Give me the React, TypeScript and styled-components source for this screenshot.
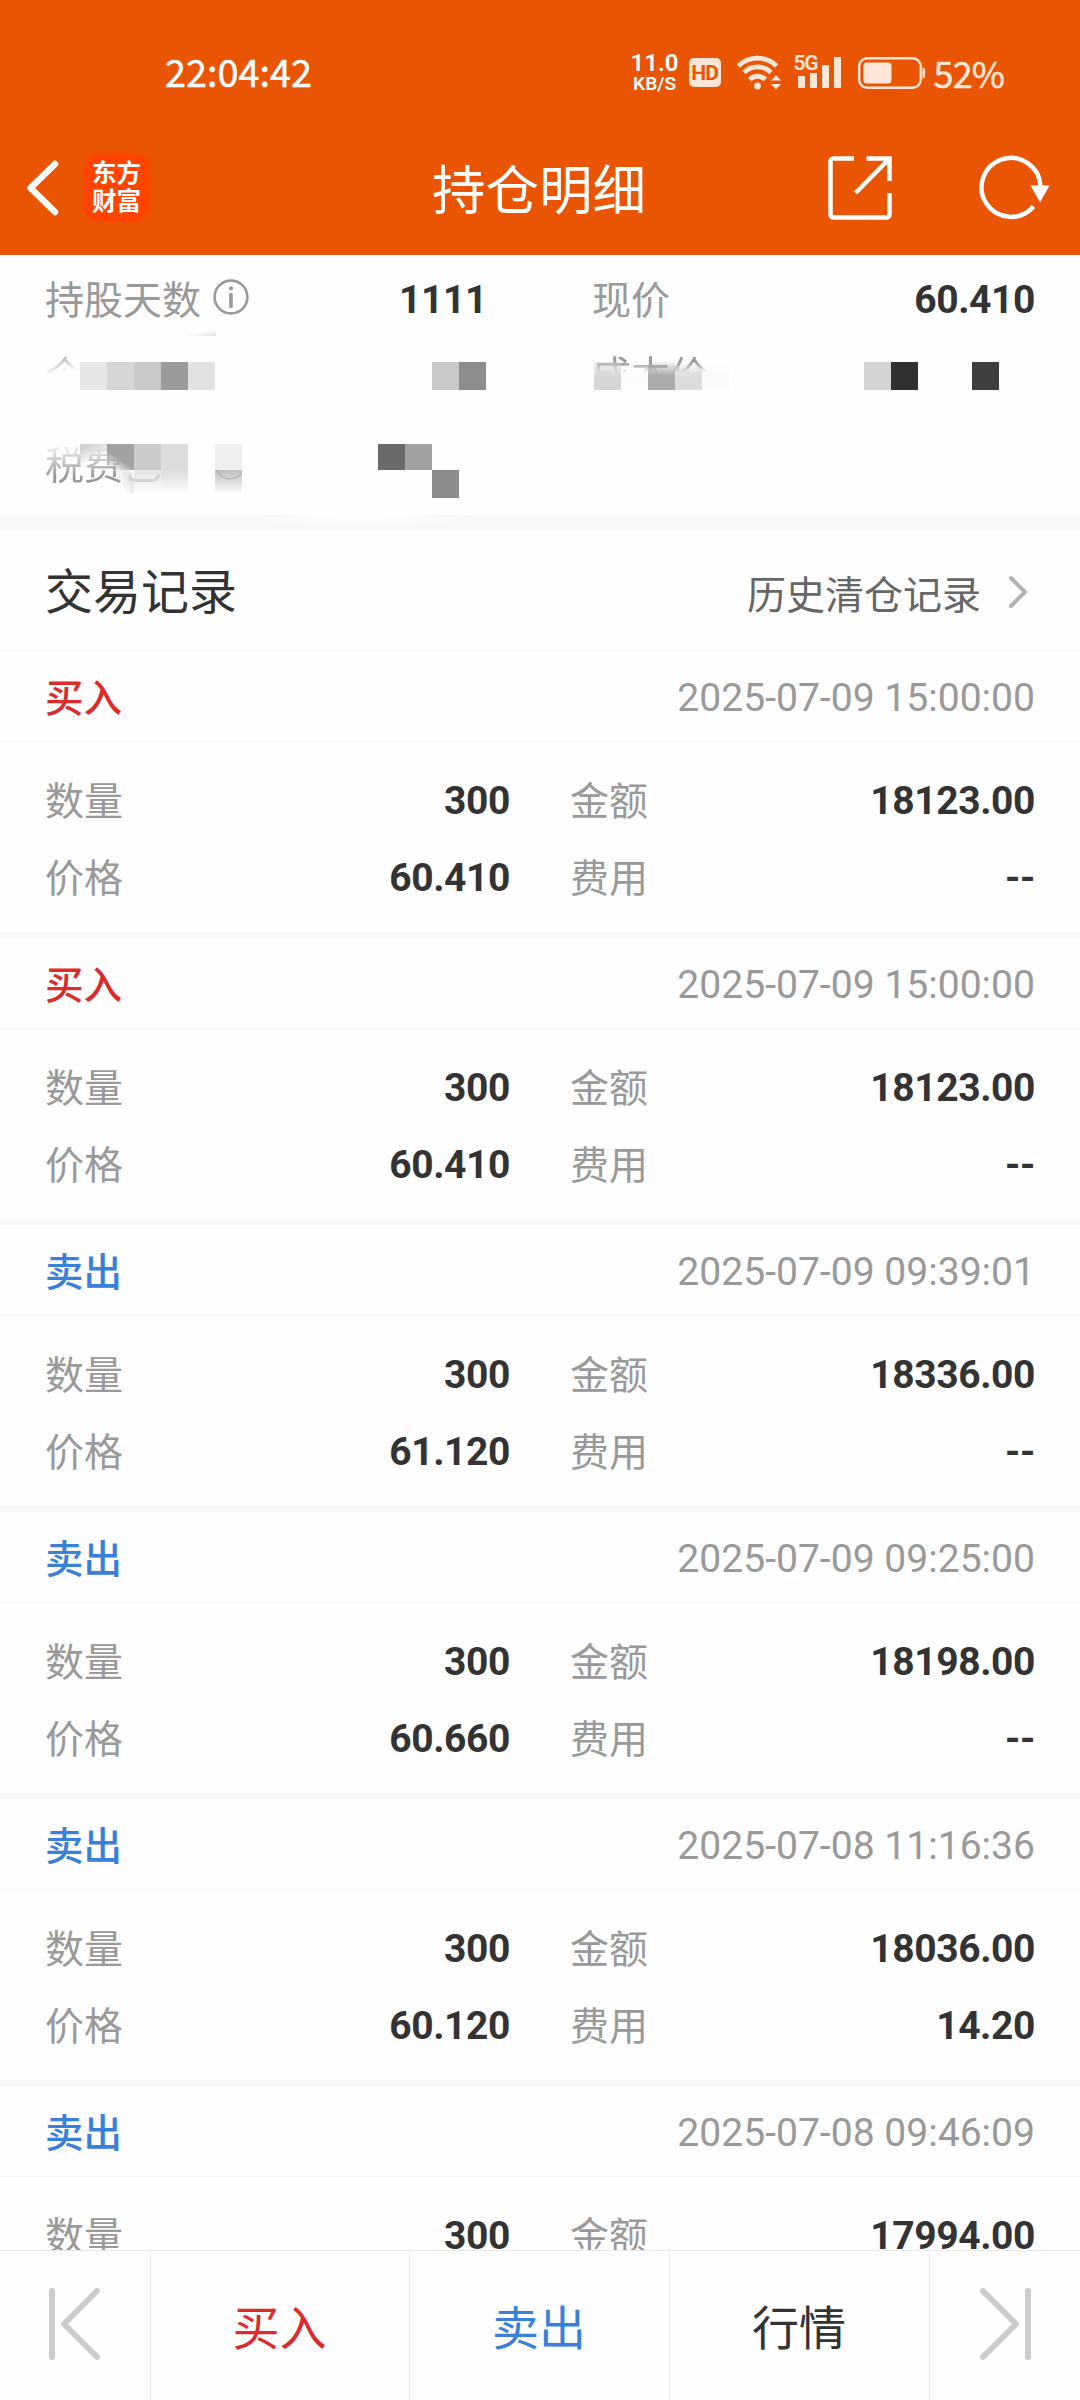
import React from "react";
import styled, { createGlobalStyle } from "styled-components";

const GlobalStyle = createGlobalStyle`
  * { box-sizing: border-box; }
  html, body { margin: 0; padding: 0; }
  body {
    background: #fefefe;
    font-family: Roboto, "Noto Sans CJK SC", sans-serif;
    color: #333;
  }
  svg { display: block; flex: none; }
`;

const Screen = styled.div`
  width: 1080px;
  height: 2400px;
  display: flex;
  flex-direction: column;
  overflow: hidden;
  background: #fefefe;
`;

const Header = styled.header`
  height: 255px;
  flex: none;
  background: #ea5504;
  color: #fff;
  display: flex;
  flex-direction: column;
`;

const StatusBar = styled.div`
  height: 126px;
  padding: 19px 76px 0 165px;
  display: flex;
  align-items: center;
  justify-content: space-between;
`;

const Clock = styled.span`
  padding-bottom: 4px;
  font: 400 37.8px/40px "Noto Sans CJK SC", sans-serif;
  -webkit-text-stroke: 0.5px #fff;
`;

const StatusIcons = styled.div`
  display: flex;
  align-items: center;
  color: #fde5d8;
`;

const NetSpeed = styled.div`
  display: flex;
  flex-direction: column;
  align-items: center;
  width: 44px;
  margin-right: 12px;
  color: #fff;
`;

const SpeedLine = styled.span<{ $size: number; $line: number }>`
  font: 600 ${(p) => p.$size}px/${(p) => p.$line}px Roboto, sans-serif;
  white-space: nowrap;
`;

const HdBadge = styled.span`
  width: 32px;
  height: 29px;
  margin-right: 16px;
  border-radius: 5px;
  background: #fde5d8;
  color: #ea5504;
  font: 700 21px/30px Roboto, sans-serif;
  letter-spacing: -0.8px;
  text-align: center;
`;

const Signal = styled.div`
  position: relative;
  margin: 0 16px 0 16px;
`;

const FiveG = styled.span`
  position: absolute;
  left: -4px;
  top: -5px;
  font: 600 21px/22px Roboto, sans-serif;
  letter-spacing: -1.4px;
`;

const Percent = styled.span`
  margin-left: 8px;
  padding-bottom: 2px;
  font: 400 36px/40px "Noto Sans CJK SC", sans-serif;
  letter-spacing: -0.9px;
  -webkit-text-stroke: 0.5px #fde5d8;
`;

const NavBar = styled.div`
  height: 129px;
  padding: 0 30px 6px 26px;
  display: grid;
  grid-template-columns: 250px 1fr 250px;
  align-items: center;
`;

const NavGroup = styled.div<{ $end?: boolean }>`
  display: flex;
  align-items: center;
  gap: ${(p) => (p.$end ? 87 : 24)}px;
  justify-content: ${(p) => (p.$end ? "flex-end" : "flex-start")};
`;

const Logo = styled.div`
  width: 67px;
  height: 67px;
  padding-bottom: 4px;
  border-radius: 14px;
  background: #ff4400;
  display: flex;
  flex-direction: column;
  align-items: center;
  justify-content: center;
  font: 700 24.5px/28px "Noto Sans CJK SC", sans-serif;
`;

const Title = styled.h1`
  margin: 0;
  padding: 9px 0 0 2px;
  text-align: center;
  font-size: 53.5px;
  line-height: 60px;
  font-weight: 400;
`;

const Summary = styled.section`
  position: relative;
  height: 260px;
  flex: none;
  padding: 7px 45px 0;
`;

const SummaryRow = styled.div<{ $height: number }>`
  height: ${(p) => p.$height}px;
  display: grid;
  grid-template-columns: 547px 1fr;
  align-items: center;
`;

const SummaryCell = styled.div<{ $first?: boolean }>`
  display: flex;
  align-items: center;
  justify-content: space-between;
  padding-right: ${(p) => (p.$first ? 105 : 0)}px;
`;

const LabelGroup = styled.div<{ $tight?: boolean }>`
  display: flex;
  align-items: center;
  gap: ${(p) => (p.$tight ? 0 : 12)}px;
  svg { margin-top: -5px; }
`;

const Label = styled.span<{ $fade?: string; $alpha?: number }>`
  position: relative;
  z-index: ${(p) => (p.$alpha ? 1 : "auto")};
  padding-top: 3px;
  font-size: 39px;
  line-height: 46px;
  color: #999;
  opacity: ${(p) => p.$alpha ?? 1};
  ${(p) => (p.$fade ? `-webkit-mask-image: ${p.$fade}; mask-image: ${p.$fade};` : "")}
`;

const Value = styled.span`
  font-size: 39px;
  line-height: 46px;
  font-weight: 700;
  letter-spacing: -0.4px;
  color: #333;
`;

const Tile = styled.i<{ $x: number; $y: number; $w?: number; $h: number; $bg: string }>`
  position: absolute;
  left: ${(p) => p.$x}px;
  top: ${(p) => p.$y}px;
  width: ${(p) => p.$w ?? 27}px;
  height: ${(p) => p.$h}px;
  background: ${(p) => p.$bg};
`;

const Divider = styled.div`
  height: 15px;
  flex: none;
  background:
    radial-gradient(ellipse 110px 14px at 360px 0, #fefefe 25%, transparent 100%),
    #f6f7f9;
`;

const SectionHead = styled.div`
  height: 121px;
  flex: none;
  padding: 6px 52px 0 45px;
  display: flex;
  align-items: center;
  justify-content: space-between;
  border-bottom: 1px solid #f5f5f5;
`;

const SectionTitle = styled.h2`
  margin: 0;
  font-size: 48px;
  line-height: 56px;
  font-weight: 400;
`;

const HistoryLink = styled.a`
  display: flex;
  align-items: center;
  gap: 27px;
  padding-top: 5px;
  font-size: 39px;
  line-height: 46px;
  color: #666;
  svg { margin-top: -8px; }
`;

const List = styled.main`
  flex: 1;
  min-height: 0;
  overflow: hidden;
`;

const Card = styled.article`
  height: 287px;
  border-bottom: 6px solid #f6f7f9;
`;

const CardHead = styled.div`
  height: 91px;
  padding: 4px 45px 0;
  display: flex;
  align-items: center;
  justify-content: space-between;
  border-bottom: 1px solid #f5f5f5;
`;

const Side = styled.span<{ $buy: boolean }>`
  padding-top: 1px;
  font-size: 38.5px;
  line-height: 46px;
  font-weight: 500;
  color: ${(p) => (p.$buy ? "#dd2a2a" : "#3880d8")};
`;

const Time = styled.time`
  font-size: 39.1px;
  line-height: 46px;
  color: #999;
`;

const CardBody = styled.div`
  padding: 20px 45px 0;
  display: grid;
  grid-template-columns: 465px 1fr;
  grid-auto-rows: 77px;
  column-gap: 60px;
`;

const Field = styled.div`
  display: flex;
  align-items: center;
  justify-content: space-between;
`;

const TabBar = styled.footer`
  height: 150px;
  flex: none;
  display: grid;
  grid-template-columns: 151px 259px 260px 260px 1fr;
  border-top: 1px solid #e8e8e8;
  background: #fefefe;
`;

const Tab = styled.button<{ $color?: string }>`
  border: 0;
  border-right: 1px solid #e8e8e8;
  padding: 6px 1px 0 0;
  background: none;
  display: flex;
  align-items: center;
  justify-content: center;
  font: 400 47px/56px Roboto, "Noto Sans CJK SC", sans-serif;
  color: ${(p) => p.$color ?? "#333"};
  &:last-child { border-right: 0; }
  svg { margin-top: -9px; }
`;

const InfoIcon = () => (
  <svg width="36" height="36" viewBox="0 0 36 36" fill="none" stroke="#999">
    <circle cx="18" cy="18" r="16.4" strokeWidth="2.6" />
    <path d="M18 15.5v12" strokeWidth="3.6" strokeLinecap="round" />
    <circle cx="18" cy="9.3" r="2.1" fill="#999" stroke="none" />
  </svg>
);

const BackIcon = () => (
  <svg width="33" height="56" viewBox="0 0 33 56" fill="none" stroke="#fff" strokeWidth="6.5" strokeLinecap="round" strokeLinejoin="round">
    <path d="M29 4 4.500 28 29 52" />
  </svg>
);

const ShareIcon = () => (
  <svg width="64" height="64" viewBox="0 0 64 64" fill="none" stroke="#fff" strokeWidth="4.500">
    <path d="M26 2.500H5.500a3 3 0 0 0-3 3v53a3 3 0 0 0 3 3h53a3 3 0 0 0 3-3V37" />
    <path d="M38.500 2.500h23V25M61 3 27.500 37" />
  </svg>
);

const RefreshIcon = () => (
  <svg width="71" height="66" viewBox="0 0 71 66">
    <path d="M54.500 51.500A29.500 29.500 0 1 1 61.500 31" fill="none" stroke="#fff" strokeWidth="4.500" />
    <path d="M51.500 30.500h19L61 47.500z" fill="#fff" />
  </svg>
);

const WifiIcon = () => (
  <svg width="45" height="35" viewBox="0 0 45 35" fill="none" stroke="#fde5d8" strokeWidth="4.800">
    <path d="M1.500 11a27 27 0 0 1 38 0" />
    <path d="M7 17.500a19 19 0 0 1 27 0" />
    <path d="M12.500 24.500a11.500 11.500 0 0 1 16 0" />
    <circle cx="20.500" cy="31" r="3.400" fill="#fde5d8" stroke="none" />
    <path d="M34 25.500l5-5.500 5 5.500zM34 29l5 5.500 5-5.500z" fill="#fde5d8" stroke="none" />
  </svg>
);

const SignalIcon = () => (
  <svg width="44" height="31" viewBox="0 0 44 31" fill="#fde5d8">
    <rect x="0" y="19" width="7" height="12" rx="1" />
    <rect x="12" y="16" width="7" height="15" rx="1" />
    <rect x="24" y="8" width="7" height="23" rx="1" />
    <rect x="36" y="0" width="7" height="31" rx="1" />
  </svg>
);

const BatteryIcon = () => (
  <svg width="68" height="32" viewBox="0 0 68 32">
    <rect x="1.200" y="1.200" width="61.500" height="29.500" rx="8" fill="none" stroke="#fde5d8" strokeWidth="2.400" />
    <rect x="5.500" y="5.500" width="28" height="21" rx="3.500" fill="#fde5d8" />
    <path d="M64.500 10.500q2.500 0 2.500 2.500v6q0 2.500-2.500 2.500z" fill="#fde5d8" />
  </svg>
);

const ChevronIcon = () => (
  <svg width="20" height="34" viewBox="0 0 20 34" fill="none" stroke="#b2b2b2" strokeWidth="4" strokeLinecap="round" strokeLinejoin="round">
    <path d="M3 3l14 14L3 31" />
  </svg>
);

const SkipIcon = ({ forward = false }: { forward?: boolean }) => (
  <svg width="52" height="72" viewBox="0 0 52 72" fill="none" stroke="#ccc" strokeWidth="6" strokeLinecap="round" strokeLinejoin="round">
    <path d={forward ? "M49 3v66M4 3l33 33L4 69" : "M3 3v66M48 3L15 36l33 33"} />
  </svg>
);

type Trade = { buy?: boolean; time: string; qty: string; amount: string; price: string; fee: string };

const trades: Trade[] = [
  { buy: true, time: "2025-07-09 15:00:00", qty: "300", amount: "18123.00", price: "60.410", fee: "--" },
  { buy: true, time: "2025-07-09 15:00:00", qty: "300", amount: "18123.00", price: "60.410", fee: "--" },
  { time: "2025-07-09 09:39:01", qty: "300", amount: "18336.00", price: "61.120", fee: "--" },
  { time: "2025-07-09 09:25:00", qty: "300", amount: "18198.00", price: "60.660", fee: "--" },
  { time: "2025-07-08 11:16:36", qty: "300", amount: "18036.00", price: "60.120", fee: "14.20" },
  { time: "2025-07-08 09:46:09", qty: "300", amount: "17994.00", price: "", fee: "" },
];

const tiles: { x: number; y: number; w?: number; h: number; bg: string }[] = [
  { x: 180, y: 76, w: 36, h: 5, bg: "linear-gradient(170deg, #fefefe 45%, #e0e0e0)" },
  { x: 80, y: 107, h: 28, bg: "#e6e6e6" },
  { x: 107, y: 107, h: 28, bg: "#d6d6d6" },
  { x: 134, y: 107, h: 28, bg: "#cacaca" },
  { x: 161, y: 107, h: 28, bg: "#9a9a9a" },
  { x: 188, y: 107, h: 28, bg: "#e1e1e1" },
  { x: 432, y: 107, h: 28, bg: "#c9c9c9" },
  { x: 459, y: 107, h: 28, bg: "#8d8d8d" },
  { x: 864, y: 107, h: 28, bg: "#d3d3d3" },
  { x: 891, y: 107, h: 28, bg: "#303030" },
  { x: 972, y: 107, h: 28, bg: "#3e3e3e" },
  { x: 378, y: 189, h: 26, bg: "#6a6a6a" },
  { x: 405, y: 189, h: 26, bg: "#a1a1a1" },
  { x: 432, y: 215, h: 28, bg: "#8c8c8c" },
  { x: 594, y: 107, h: 28, bg: "linear-gradient(#dcdcdc66, #d6d6d6 55%)" },
  { x: 621, y: 107, h: 28, bg: "linear-gradient(#fcfcfc00, #fcfcfc 55%)" },
  { x: 648, y: 107, h: 28, bg: "linear-gradient(#aaaaaa22, #ababab 50%)" },
  { x: 675, y: 107, h: 28, bg: "linear-gradient(#dcdcdc22, #dcdcdc 55%)" },
  { x: 702, y: 107, h: 28, bg: "linear-gradient(#fafafa44, #fafafa 50%)" },
  { x: 80, y: 189, h: 26, bg: "linear-gradient(155deg, #d2d2d2 15%, #d6d6d600 60%)" },
  { x: 107, y: 189, h: 26, bg: "linear-gradient(35deg, #a2a2a200 10%, #a2a2a2 45%)" },
  { x: 134, y: 189, h: 26, bg: "#cccccc" },
  { x: 161, y: 189, h: 26, bg: "#dcdcdc" },
  { x: 215, y: 189, h: 26, bg: "#efefef" },
  { x: 107, y: 215, h: 24, bg: "linear-gradient(60deg, #fefefe00 45%, #d8d8d899 75%, #fefefe00)" },
  { x: 134, y: 215, h: 24, bg: "linear-gradient(#e4e4e4, #fefefe)" },
  { x: 161, y: 215, h: 24, bg: "linear-gradient(#dcdcdc, #fefefe)" },
  { x: 215, y: 215, h: 24, bg: "radial-gradient(circle 16px at 15px -6px, transparent 85%, #b0b0b0 92%, transparent), linear-gradient(#bfbfbf, #fefefe)" },
];

const App = () => (
  <>
    <GlobalStyle />
    <Screen>
      <Header>
        <StatusBar>
          <Clock>22:04:42</Clock>
          <StatusIcons>
            <NetSpeed>
              <SpeedLine $size={24} $line={21}>11.0</SpeedLine>
              <SpeedLine $size={19} $line={19}>KB/S</SpeedLine>
            </NetSpeed>
            <HdBadge>HD</HdBadge>
            <WifiIcon />
            <Signal>
              <FiveG>5G</FiveG>
              <SignalIcon />
            </Signal>
            <BatteryIcon />
            <Percent>52%</Percent>
          </StatusIcons>
        </StatusBar>
        <NavBar>
          <NavGroup>
            <BackIcon />
            <Logo>
              <span>东方</span>
              <span>财富</span>
            </Logo>
          </NavGroup>
          <Title>持仓明细</Title>
          <NavGroup $end>
            <ShareIcon />
            <RefreshIcon />
          </NavGroup>
        </NavBar>
      </Header>

      <Summary>
        <SummaryRow $height={75}>
          <SummaryCell $first>
            <LabelGroup>
              <Label>持股天数</Label>
              <InfoIcon />
            </LabelGroup>
            <Value>1111</Value>
          </SummaryCell>
          <SummaryCell>
            <Label>现价</Label>
            <Value>60.410</Value>
          </SummaryCell>
        </SummaryRow>
        <SummaryRow $height={75}>
          <SummaryCell $first>
            <Label $fade="linear-gradient(170deg, #000 5%, transparent 46%)">个</Label>
          </SummaryCell>
          <SummaryCell>
            <Label $fade="linear-gradient(#000 30%, transparent 52%)">成本价</Label>
          </SummaryCell>
        </SummaryRow>
        <SummaryRow $height={104}>
          <SummaryCell $first>
            <LabelGroup $tight>
              <Label $fade="linear-gradient(transparent 5%, #000 75%)">税费</Label>
              <Label $alpha={0.3} $fade="linear-gradient(transparent 66%, #000 74%)">已</Label>
            </LabelGroup>
          </SummaryCell>
        </SummaryRow>
        {tiles.map((t) => (
          <Tile key={`${t.x}-${t.y}`} $x={t.x} $y={t.y} $w={t.w} $h={t.h} $bg={t.bg} />
        ))}
      </Summary>
      <Divider />

      <SectionHead>
        <SectionTitle>交易记录</SectionTitle>
        <HistoryLink>
          历史清仓记录
          <ChevronIcon />
        </HistoryLink>
      </SectionHead>

      <List>
        {trades.map((t, i) => (
          <Card key={i}>
            <CardHead>
              <Side $buy={!!t.buy}>{t.buy ? "买入" : "卖出"}</Side>
              <Time>{t.time}</Time>
            </CardHead>
            <CardBody>
              <Field>
                <Label>数量</Label>
                <Value>{t.qty}</Value>
              </Field>
              <Field>
                <Label>金额</Label>
                <Value>{t.amount}</Value>
              </Field>
              {t.price && (
                <>
                  <Field>
                    <Label>价格</Label>
                    <Value>{t.price}</Value>
                  </Field>
                  <Field>
                    <Label>费用</Label>
                    <Value>{t.fee}</Value>
                  </Field>
                </>
              )}
            </CardBody>
          </Card>
        ))}
      </List>

      <TabBar>
        <Tab>
          <SkipIcon />
        </Tab>
        <Tab $color="#dd2a2a">买入</Tab>
        <Tab $color="#3880d8">卖出</Tab>
        <Tab>行情</Tab>
        <Tab>
          <SkipIcon forward />
        </Tab>
      </TabBar>
    </Screen>
  </>
);

export default App;
